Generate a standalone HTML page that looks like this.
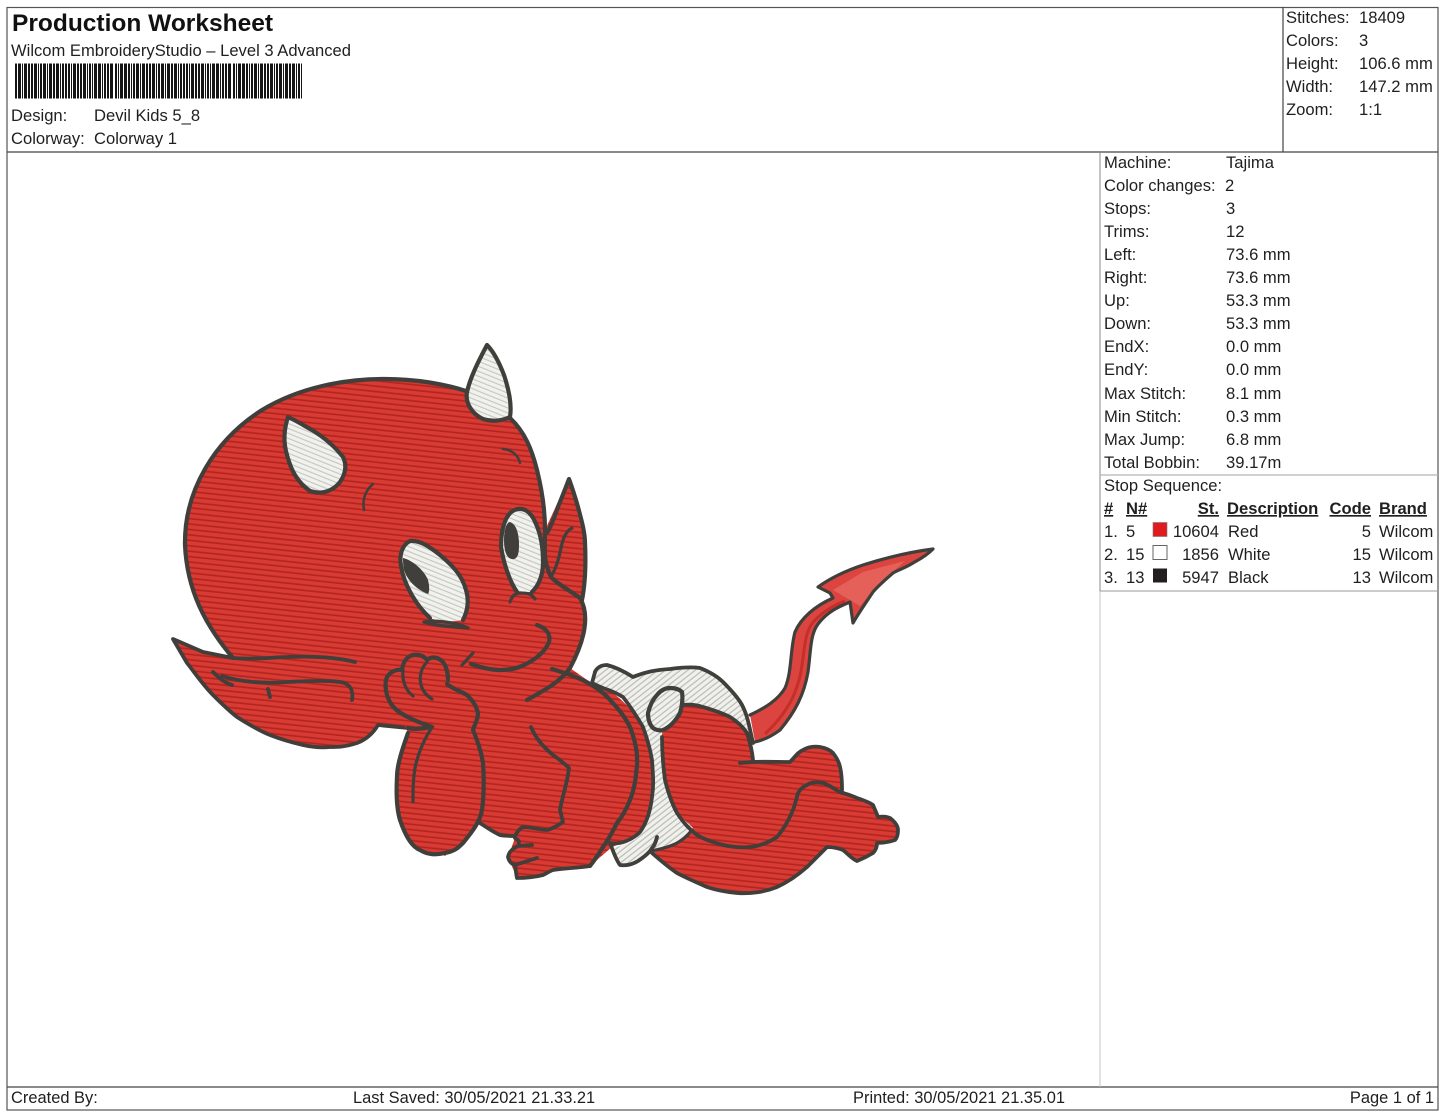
<!DOCTYPE html>
<html><head><meta charset="utf-8"><title>Production Worksheet</title>
<style>
html,body{margin:0;padding:0;background:#fff}
svg{display:block}
text{font-family:"Liberation Sans",Arial,sans-serif;font-size:16.6px;fill:#1f1f1f}
text.f{font-size:16.45px}
.o{fill:none;stroke:#413f3b;stroke-width:4.2;stroke-linecap:round;stroke-linejoin:round}
.t{fill:none;stroke:#413f3b;stroke-width:3.2;stroke-linecap:round;stroke-linejoin:round}
.u{text-decoration:underline;font-weight:bold}
.r{text-anchor:end}
</style></head><body>
<svg width="1445" height="1112" viewBox="0 0 1445 1112" xmlns="http://www.w3.org/2000/svg">
<defs>
<pattern id="r" patternUnits="userSpaceOnUse" width="20" height="5.4" patternTransform="rotate(6)">
<rect width="20" height="5.4" fill="#d83b34"/><rect y="3.7" width="20" height="1.7" fill="#b42520"/></pattern>
<pattern id="w" patternUnits="userSpaceOnUse" width="20" height="4.6" patternTransform="rotate(22)">
<rect width="20" height="4.6" fill="#f1f1ed"/><rect y="3.5" width="20" height="1.1" fill="#c6c6c0"/></pattern>
<pattern id="d" patternUnits="userSpaceOnUse" width="20" height="4.6" patternTransform="rotate(-38)">
<rect width="20" height="4.6" fill="#f0f0ec"/><rect y="3.4" width="20" height="1.2" fill="#bcbcb6"/></pattern>
</defs>

<!-- frame -->
<rect x="7" y="7.5" width="1431" height="1102.5" fill="none" stroke="#555" stroke-width="1.2"/>
<path d="M7 152H1438M1283 7V152M7 1087H1438" fill="none" stroke="#444" stroke-width="1.2"/>
<path d="M1100 152V591" stroke="#888" stroke-width="1"/>
<path d="M1100 591V1087" stroke="#c4c4c4" stroke-width="1"/>
<path d="M1100 475H1438" stroke="#b5b5b5" stroke-width="1.2"/>
<path d="M1100 591H1438" stroke="#999" stroke-width="1"/>

<!-- header text -->
<text x="12" y="31" style="font-size:24px;font-weight:bold;fill:#111" textLength="261" lengthAdjust="spacingAndGlyphs">Production Worksheet</text>
<text x="11" y="56" textLength="340" lengthAdjust="spacingAndGlyphs">Wilcom EmbroideryStudio – Level 3 Advanced</text>
<line x1="15" y1="81" x2="302" y2="81" stroke="#151515" stroke-width="35" stroke-dasharray="2 1 3 1 1 1 3 1 2 1 2 1 3 1 1 1 2 1 3 1 1 1 3 1 2 1 3 1 1 1 2 1 2 1 2 1 1 1 3 1 2 1 2 1 3 1 1 1 2 1 1 1 3 1 3 1 1 1 2 1 2 1 3 2 2 1 1 1 3 1 3 1 2 1 1 1"/>
<text x="11" y="121">Design:</text><text x="94" y="121">Devil Kids 5_8</text>
<text x="11" y="144">Colorway:</text><text x="94" y="144">Colorway 1</text>

<text x="1286" y="23">Stitches:</text><text x="1359" y="23">18409</text>
<text x="1286" y="46">Colors:</text><text x="1359" y="46">3</text>
<text x="1286" y="69">Height:</text><text x="1359" y="69">106.6 mm</text>
<text x="1286" y="92">Width:</text><text x="1359" y="92">147.2 mm</text>
<text x="1286" y="115">Zoom:</text><text x="1359" y="115">1:1</text>

<!-- right data -->
<text x="1104" y="168">Machine:</text><text x="1226" y="168">Tajima</text>
<text x="1104" y="191">Color changes:</text><text x="1225" y="191">2</text>
<text x="1104" y="214">Stops:</text><text x="1226" y="214">3</text>
<text x="1104" y="237">Trims:</text><text x="1226" y="237">12</text>
<text x="1104" y="260">Left:</text><text x="1226" y="260">73.6 mm</text>
<text x="1104" y="283">Right:</text><text x="1226" y="283">73.6 mm</text>
<text x="1104" y="306">Up:</text><text x="1226" y="306">53.3 mm</text>
<text x="1104" y="329">Down:</text><text x="1226" y="329">53.3 mm</text>
<text x="1104" y="352">EndX:</text><text x="1226" y="352">0.0 mm</text>
<text x="1104" y="375">EndY:</text><text x="1226" y="375">0.0 mm</text>
<text x="1104" y="399">Max Stitch:</text><text x="1226" y="399">8.1 mm</text>
<text x="1104" y="422">Min Stitch:</text><text x="1226" y="422">0.3 mm</text>
<text x="1104" y="445">Max Jump:</text><text x="1226" y="445">6.8 mm</text>
<text x="1104" y="468">Total Bobbin:</text><text x="1226" y="468">39.17m</text>
<text x="1104" y="491">Stop Sequence:</text>
<text x="1104" y="514" class="u">#</text><text x="1126" y="514" class="u">N#</text><text x="1219" y="514" class="u r">St.</text><text x="1227" y="514" class="u">Description</text><text x="1371" y="514" class="u r">Code</text><text x="1379" y="514" class="u">Brand</text>
<text x="1104" y="537">1.</text><text x="1126" y="537">5</text><text x="1219" y="537" class="r">10604</text><text x="1228" y="537">Red</text><text x="1371" y="537" class="r">5</text><text x="1379" y="537">Wilcom</text>
<text x="1104" y="560">2.</text><text x="1126" y="560">15</text><text x="1219" y="560" class="r">1856</text><text x="1228" y="560">White</text><text x="1371" y="560" class="r">15</text><text x="1379" y="560">Wilcom</text>
<text x="1104" y="583">3.</text><text x="1126" y="583">13</text><text x="1219" y="583" class="r">5947</text><text x="1228" y="583">Black</text><text x="1371" y="583" class="r">13</text><text x="1379" y="583">Wilcom</text>
<rect x="1153" y="522.5" width="14" height="14" fill="#e01b1f" stroke="#777" stroke-width=".6"/>
<rect x="1153" y="545.5" width="14" height="14" fill="#fff" stroke="#666" stroke-width="1"/>
<rect x="1153" y="568.5" width="14" height="14" fill="#231f20"/>

<!-- footer -->
<text x="11" y="1103" class="f">Created By:</text>
<text x="353" y="1103" class="f">Last Saved: 30/05/2021 21.33.21</text>
<text x="853" y="1103" class="f">Printed: 30/05/2021 21.35.01</text>
<text x="1434" y="1103" class="f r">Page 1 of 1</text>

<!-- TAIL -->
<path d="M750 715C765 708 778 700 785 688C792 672 790 650 795 632C801 618 815 606 833 598L830 593L818 587C832 577 848 570 863 565C885 558 910 552 933 549C925 557 918 560 913 563C905 568 898 570 893 573C885 580 878 586 873 592C865 604 858 614 853 623L850 602C838 607 827 612 818 624C810 635 811 650 808 672C804 695 795 712 780 730C772 736 764 740 755 742Z" fill="#dc4440"/>
<path d="M765 734C785 715 798 695 802 665C805 645 805 630 815 620C825 610 835 605 845 601" fill="none" stroke="#c42f2a" stroke-width="3"/>
<path d="M833 590L863 572L905 561L878 585L860 606L850 600Z" fill="#e6605a"/>
<path d="M750 715C765 708 778 700 785 688C792 672 790 650 795 632C801 618 815 606 833 598L830 593L818 587C832 577 848 570 863 565C885 558 910 552 933 549C925 557 918 560 913 563C905 568 898 570 893 573C885 580 878 586 873 592C865 604 858 614 853 623L850 602C838 607 827 612 818 624C810 635 811 650 808 672C804 695 795 712 780 730C772 736 764 740 755 742" class="t"/>

<!-- LEFT EAR -->
<path d="M173 639L203 652L233 658L240 648L400 648L408 728L378 725C372 735 365 740 357 743C345 747 338 747 330 747C320 748 312 747 303 745C290 742 280 739 270 735C258 730 248 724 237 717C228 710 220 702 213 695C203 685 195 673 187 663Z" fill="url(#r)"/>
<path d="M408 728L378 725C372 735 365 740 357 743C345 747 338 747 330 747C320 748 312 747 303 745C290 742 280 739 270 735C258 730 248 724 237 717C228 710 220 702 213 695C203 685 195 673 187 663L173 639L203 652L233 658C260 660 275 657 287 657C310 656 335 657 355 662" class="o" style="stroke-width:3.8"/>
<path d="M213 672C222 681 228 684 232 685M222 676C240 682 265 684 287 682C310 681 325 680 340 682C348 683 354 688 352 700M268 689L270 697" class="o" style="stroke-width:3.8"/>

<!-- HEAD + BODY FILL -->
<path d="M233 658C205 625 187 590 185 545C184 490 215 440 262 410C300 387 345 379 385 379C415 379 445 384 468 392L510 418C530 435 537 460 542 490L545 530L569 478L585 543L582 600C590 615 585 640 570 668L590 682L603 688C615 692 630 706 643 727C647 738 650 748 652 760C653 775 652 790 650 803C648 815 643 826 635 838L612 847L590 866L553 870L543 875L517 878L508 857L515 838L500 835L480 823L445 856L400 820L397 777L408 733L385 682L378 650L240 650Z" fill="url(#r)"/>

<!-- HEAD OUTLINE -->
<path d="M233 658C205 625 187 590 185 545C184 490 215 440 262 410C300 387 345 379 385 379C415 379 445 384 466 391" class="o"/>
<path d="M510 418C525 432 532 450 537 470C542 490 545 510 545 530C545 545 544 555 546 563C548 570 550 577 553 579C562 587 572 592 580 598C590 615 585 640 570 668C560 682 545 690 527 700" class="o"/>
<path d="M547 533C552 525 555 515 558 507C562 497 566 487 569 479C573 490 576 500 578 507C582 522 585 533 585 543C586 565 585 585 582 600" class="o"/>
<path d="M572 528C566 531 563 538 561 548C559 558 556 568 552 575" class="t"/>

<!-- Horn -->
<path d="M487 345C478 362 470 378 467 392C465 403 472 414 483 419C492 422 502 421 510 417C512 405 509 390 504 375C499 362 494 352 487 345Z" fill="url(#w)"/>
<path d="M487 345C478 362 470 378 467 392C465 403 472 414 483 419C492 422 502 421 510 417C512 405 509 390 504 375C499 362 494 352 487 345Z" class="o"/>

<!-- Brow spot -->
<path d="M288 417C283 432 284 445 287 455C291 470 297 482 310 491C322 495 333 491 340 482C346 473 347 465 343 457C336 448 325 438 312 430C303 425 295 420 288 417Z" fill="url(#w)"/>
<path d="M288 417C283 432 284 445 287 455C291 470 297 482 310 491C322 495 333 491 340 482C346 473 347 465 343 457C336 448 325 438 312 430C303 425 295 420 288 417Z" class="o"/>

<!-- marks -->
<path d="M373 484C366 490 362 498 364 510M503 449C512 450 518 455 520 463" class="t" style="stroke-width:2.5"/>

<!-- Eye left -->
<path d="M410 541C402 545 399 555 401 566C404 585 416 605 430 618C440 622 452 622 463 620C468 610 469 600 466 590C462 575 452 565 440 555C430 547 420 540 410 541Z" fill="url(#w)"/>
<path d="M430 618C416 605 404 585 401 566C399 555 402 545 410 541C420 540 430 547 440 555C452 565 462 575 466 590C469 600 468 610 463 620" class="o"/>
<path d="M403 558C412 560 424 570 428 580C430 588 429 593 428 594C418 590 408 582 404 570C403 565 403 560 403 558Z" fill="#413f3b"/>
<path d="M424 622C435 620 455 622 468 628C452 626 440 627 424 622Z" class="o" style="stroke-width:3.4"/>

<!-- Eye right -->
<path d="M518 509C506 511 502 525 501 542C502 560 506 575 512 585L517 592L532 592C539 585 543 575 543 562C543 548 541 535 536 524C532 514 526 508 518 509Z" fill="url(#w)"/>
<path d="M517 592C510 582 504 565 501 547C501 530 505 511 518 509C526 508 532 514 536 524C541 535 543 548 543 562C543 575 539 585 532 592" class="o"/>
<path d="M510 522C516 524 519 533 519 545C519 553 518 558 514 559C507 560 504 552 504 540C504 530 506 523 510 522Z" fill="#413f3b"/>
<path d="M510 602C512 596 515 593 520 593C526 593 531 593 535 599" class="t"/>

<!-- Smile -->
<path d="M537 625C546 628 551 634 549 642C545 652 535 660 522 666C505 673 488 670 471 664" class="o"/>
<path d="M473 653L462 665" class="t"/>

<!-- ARM -->
<path d="M448 680C448 672 446 666 443 662C438 657 432 656 427 660C424 656 419 654 413 655C406 657 403 662 402 670C396 669 390 672 387 677C384 684 386 695 390 702C394 710 403 715 412 719C420 723 427 725 432 727C424 728 415 730 408 733C402 750 397 765 397 777C396 795 397 810 400 820C405 835 412 847 420 850C428 855 436 855 445 853C455 851 458 848 463 843C472 832 480 822 482 810C484 795 484 778 483 763C481 750 477 740 473 730C475 723 478 720 478 713C476 705 472 700 467 695C460 691 453 689 447 687Z" fill="url(#r)"/>
<path d="M448 680C448 672 446 666 443 662C438 657 432 656 427 660C424 656 419 654 413 655C406 657 403 662 402 670C396 669 390 672 387 677C384 684 386 695 390 702C394 710 403 715 412 719C420 723 427 725 432 727" class="o"/>
<path d="M432 727C424 728 415 730 408 728M408 733C402 750 397 765 397 777C396 795 397 810 400 820C405 835 412 847 420 850C428 855 436 855 445 853C455 851 458 848 463 843C472 832 480 822 482 810C484 795 484 778 483 763C481 750 477 740 473 730C475 723 478 720 478 713C476 705 472 700 467 695C460 691 453 689 447 684" class="o"/>
<path d="M432 727C425 738 418 753 415 768C413 780 413 790 413 802" class="t"/>
<path d="M403 670C402 680 405 690 413 696M427 662C421 668 419 677 421 685C423 692 427 696 432 699" class="t"/>

<!-- DIAPER -->
<path d="M595 672C597 667 602 665 607 665C615 667 622 670 633 677C645 672 655 670 670 669C685 667 693 667 700 668C710 672 717 676 723 682C733 692 740 700 743 707L752 735L670 790L693 828C688 835 682 840 677 843L650 850C642 858 638 862 633 863C627 865 622 865 620 865C616 860 613 854 612 848C622 846 632 842 637 838C643 826 648 815 650 803C652 790 653 775 652 760C650 748 647 738 643 727C636 715 630 706 623 697C615 692 609 690 603 688L593 683Z" fill="url(#d)"/>
<path d="M595 672C597 667 602 665 607 665C615 667 622 670 633 677C645 672 655 670 670 669C685 667 693 667 700 668C710 672 717 676 723 682C733 692 740 700 743 707C748 717 750 730 753 743" class="t" style="stroke-width:3.8"/>
<path d="M595 672L592 683C598 686 600 687 603 688C609 690 615 692 623 697C630 706 636 715 643 727C647 738 650 748 652 760C653 775 654 785 652 797C650 815 645 825 640 832C632 840 620 845 610 843C613 851 616 860 620 865C627 866 633 864 638 861C644 857 650 852 652 848C655 845 656 841 657 837" class="o" style="stroke-width:3.8"/>
<!-- body back arc -->
<path d="M552 669C565 673 578 677 590 684C600 690 606 695 610 700C618 708 625 717 630 727C635 740 638 752 637 765C636 776 635 788 630 800C626 810 622 817 617 823C612 833 608 840 603 847C598 855 594 861 590 866" class="o"/>

<!-- LEG -->
<path d="M662 737C662 725 668 712 683 705C690 704 697 705 703 707C713 710 722 713 730 717C738 722 743 727 747 733C750 742 752 750 753 760L790 762C795 757 798 752 803 750C808 747 814 746 820 747C826 748 830 750 833 753C837 758 839 762 840 767L842 790C848 793 852 796 857 798C863 800 869 802 873 805C875 810 877 814 878 817C884 816 887 817 890 818C895 822 898 826 898 830C898 835 897 838 895 840C889 842 883 843 877 843C877 848 875 851 873 853C868 856 862 859 857 861C852 859 848 854 843 850C838 848 832 847 827 847C820 854 814 860 807 867C798 875 788 882 777 887C765 892 750 894 737 893C726 892 716 890 707 887C696 882 686 878 677 873C668 867 660 860 652 853C660 850 670 847 677 843C683 840 688 835 693 828C688 822 683 820 677 813C671 802 668 792 665 780C663 765 662 750 662 737Z" fill="url(#r)"/>
<path d="M652 853C660 860 668 867 677 873C686 878 696 882 707 887C716 890 726 892 737 893C750 894 765 892 777 887C788 882 798 875 807 867C814 860 820 854 827 847C832 847 838 848 843 850C848 854 852 859 857 861C862 859 868 856 873 853C875 851 877 848 877 843C883 843 889 842 895 840C897 838 898 835 898 830C898 826 895 822 890 818C887 817 884 816 878 817C877 814 875 810 873 805C869 802 863 800 857 798C852 796 848 794 842 793C835 790 830 785 823 783C816 782 811 782 807 785C802 787 800 790 798 793C796 800 795 805 793 810C788 822 783 830 777 837C768 843 760 846 750 847C740 848 732 847 723 845C713 842 705 840 697 835C688 828 683 822 677 813C671 802 668 792 665 780C663 765 662 750 662 737" class="o" style="stroke-width:3.8"/>
<path d="M652 851C660 849 670 847 677 843C683 840 688 835 692 830" class="t"/>
<path d="M740 763C755 761 772 762 790 762C795 757 798 752 803 750C808 747 814 746 820 747C826 748 830 750 833 753C837 758 839 762 840 767C842 775 842 783 842 790M683 705C690 704 697 705 703 707C713 710 722 713 730 717C738 722 743 727 747 733C750 742 752 750 753 760" class="o" style="stroke-width:3.8"/>
<!-- diaper oval -->
<path d="M648 713C650 705 653 699 657 695C661 690 665 688 670 688C676 688 680 690 682 692C683 698 682 707 680 713C675 722 670 727 663 730C659 731 656 730 653 728C649 724 648 719 648 713Z" fill="url(#d)"/>
<path d="M648 713C650 705 653 699 657 695C661 690 665 688 670 688C676 688 680 690 682 692C683 698 682 707 680 713C675 722 670 727 663 730C659 731 656 730 653 728C649 724 648 719 648 713Z" class="o"/>

<!-- Belly / left foot -->
<path d="M531 727C535 737 542 746 553 755C560 760 565 764 569 768C567 785 562 797 560 810L563 822C557 826 552 829 547 830C540 830 532 827 523 827C519 829 517 832 515 836C510 836 505 836 500 835C493 832 486 827 480 823" class="o" style="stroke-width:3.8"/>
<path d="M515 838C519 840 520 842 518 846L532 845M518 846C512 849 509 852 508 857C509 861 511 864 515 865L537 858M515 865C516 870 516 874 517 878C525 878 535 877 543 875C547 873 550 871 553 870C565 868 578 868 590 866" class="o" style="stroke-width:3.8"/>
</svg>
</body></html>
